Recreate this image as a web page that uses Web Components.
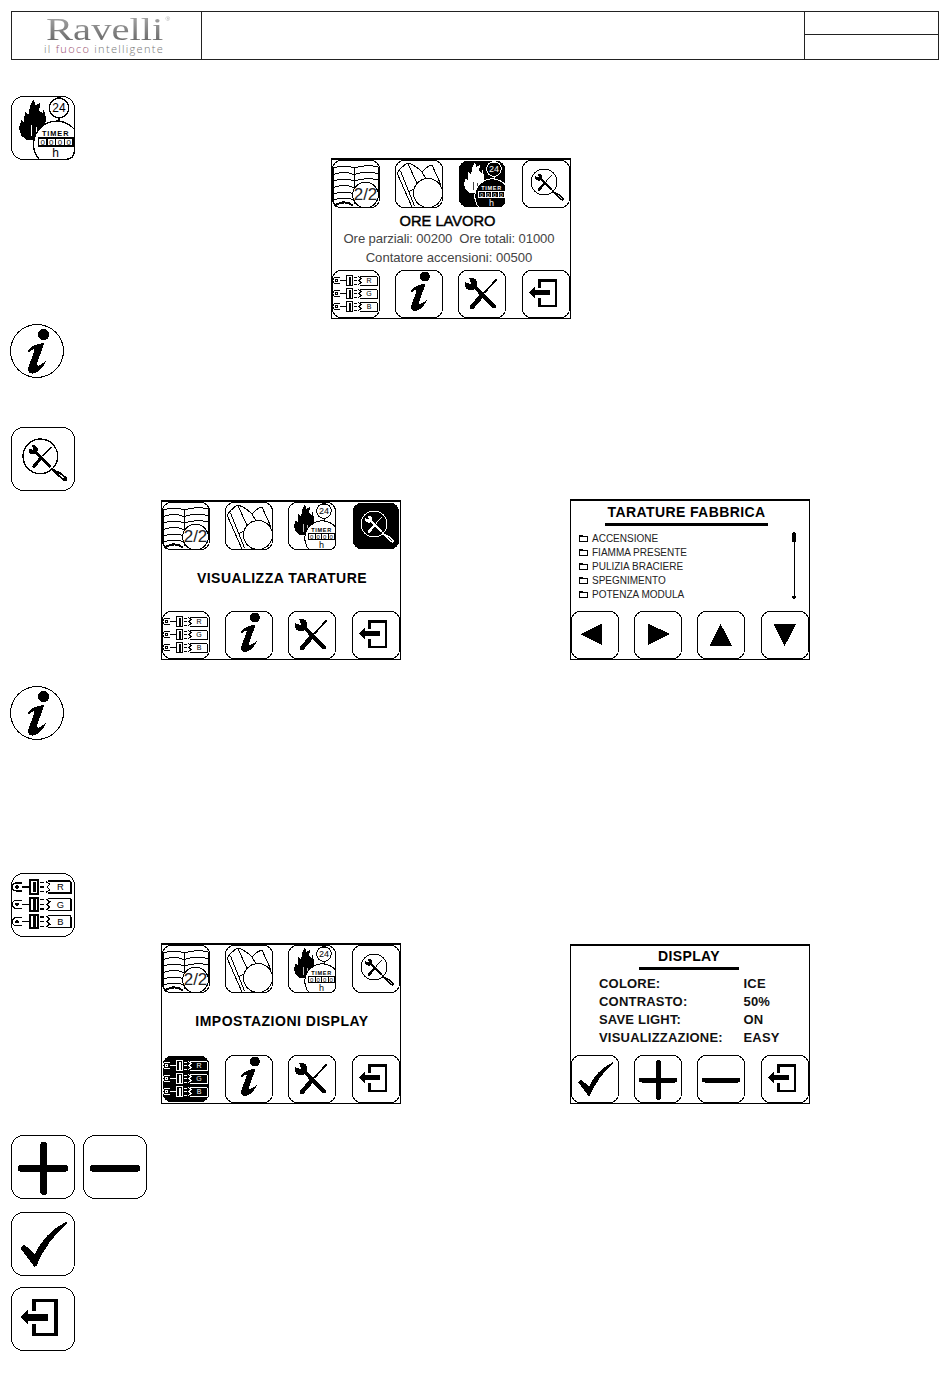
<!DOCTYPE html>
<html lang="it">
<head>
<meta charset="utf-8">
<title>Ravelli</title>
<style>
html,body{margin:0;padding:0;background:#fff;font-family:"Liberation Sans",Arial,sans-serif;color:#000}
</style>
</head>
<body>
<doc-page>
  <doc-header></doc-header>
  <doc-row style="margin:36px 0 0 11px"><lcd-icon name="timer" size="64"></lcd-icon></doc-row>
  <doc-row style="margin:-2px 0 0 331px">
    <lcd-screen style="height:161px">
      <lcd-icon slot="top" name="book"></lcd-icon><lcd-icon slot="top" name="flag"></lcd-icon><lcd-icon slot="top" name="timer" inv></lcd-icon><lcd-icon slot="top" name="loupe"></lcd-icon>
      <lcd-message>
        <b>ORE LAVORO</b>
        <span style="letter-spacing:-.1px">Ore parziali: 00200&nbsp; Ore totali: 01000</span>
        <span>Contatore accensioni: 00500</span>
      </lcd-message>
      <lcd-icon slot="bottom" name="rgb"></lcd-icon><lcd-icon slot="bottom" name="info"></lcd-icon><lcd-icon slot="bottom" name="tools"></lcd-icon><lcd-icon slot="bottom" name="exit"></lcd-icon>
    </lcd-screen>
  </doc-row>
  <doc-row style="margin:5px 0 0 10px"><lcd-icon name="info" size="54" round></lcd-icon></doc-row>
  <doc-row style="margin:49px 0 0 11px"><lcd-icon name="loupe" size="64"></lcd-icon></doc-row>
  <doc-row style="margin:8px 0 0 161px;gap:169px;align-items:flex-end">
    <lcd-screen style="height:160px">
      <lcd-icon slot="top" name="book"></lcd-icon><lcd-icon slot="top" name="flag"></lcd-icon><lcd-icon slot="top" name="timer"></lcd-icon><lcd-icon slot="top" name="loupe" inv></lcd-icon>
      <lcd-caption>VISUALIZZA TARATURE</lcd-caption>
      <lcd-icon slot="bottom" name="rgb"></lcd-icon><lcd-icon slot="bottom" name="info"></lcd-icon><lcd-icon slot="bottom" name="tools"></lcd-icon><lcd-icon slot="bottom" name="exit"></lcd-icon>
    </lcd-screen>
    <lcd-screen style="height:161px">
      <lcd-heading inset="34" rule="163">TARATURE FABBRICA</lcd-heading>
      <lcd-list>
        <lcd-folder>ACCENSIONE</lcd-folder>
        <lcd-folder>FIAMMA PRESENTE</lcd-folder>
        <lcd-folder>PULIZIA BRACIERE</lcd-folder>
        <lcd-folder>SPEGNIMENTO</lcd-folder>
        <lcd-folder>POTENZA MODULA</lcd-folder>
      </lcd-list>
      <lcd-icon slot="bottom" name="left"></lcd-icon><lcd-icon slot="bottom" name="right"></lcd-icon><lcd-icon slot="bottom" name="up"></lcd-icon><lcd-icon slot="bottom" name="down"></lcd-icon>
    </lcd-screen>
  </doc-row>
  <doc-row style="margin:26px 0 0 10px"><lcd-icon name="info" size="54" round></lcd-icon></doc-row>
  <doc-row style="margin:133px 0 0 11px"><lcd-icon name="rgb" size="64"></lcd-icon></doc-row>
  <doc-row style="margin:6px 0 0 161px;gap:169px;align-items:flex-end">
    <lcd-screen style="height:161px">
      <lcd-icon slot="top" name="book"></lcd-icon><lcd-icon slot="top" name="flag"></lcd-icon><lcd-icon slot="top" name="timer"></lcd-icon><lcd-icon slot="top" name="loupe"></lcd-icon>
      <lcd-caption>IMPOSTAZIONI DISPLAY</lcd-caption>
      <lcd-icon slot="bottom" name="rgb" inv></lcd-icon><lcd-icon slot="bottom" name="info"></lcd-icon><lcd-icon slot="bottom" name="tools"></lcd-icon><lcd-icon slot="bottom" name="exit"></lcd-icon>
    </lcd-screen>
    <lcd-screen style="height:160px">
      <lcd-heading inset="68" rule="100" style="margin-top:-1px">DISPLAY</lcd-heading>
      <lcd-settings>
        <span>COLORE:</span><span>ICE</span>
        <span>CONTRASTO:</span><span>50%</span>
        <span>SAVE LIGHT:</span><span>ON</span>
        <span>VISUALIZZAZIONE:</span><span>EASY</span>
      </lcd-settings>
      <lcd-icon slot="bottom" name="check"></lcd-icon><lcd-icon slot="bottom" name="plus"></lcd-icon><lcd-icon slot="bottom" name="minus"></lcd-icon><lcd-icon slot="bottom" name="exit"></lcd-icon>
    </lcd-screen>
  </doc-row>
  <doc-row style="margin:31px 0 0 11px;gap:8px"><lcd-icon name="plus" size="64"></lcd-icon><lcd-icon name="minus" size="64"></lcd-icon></doc-row>
  <doc-row style="margin:13px 0 0 11px"><lcd-icon name="check" size="64"></lcd-icon></doc-row>
  <doc-row style="margin:11px 0 0 11px"><lcd-icon name="exit" size="64"></lcd-icon></doc-row>
</doc-page>
<script>
const mk = (tag, css, html) => {
  customElements.define(tag, class extends HTMLElement {
    constructor(){ super(); this.attachShadow({mode:'open'}).innerHTML = `<style>${css}</style>${html}`; }
  });
};
mk('doc-page', ':host{display:block;width:950px;height:1387px;padding-top:11px;box-sizing:border-box;overflow:hidden}', '<slot></slot>');
mk('doc-row', ':host{display:flex}', '<slot></slot>');
mk('doc-header', `
  :host{display:grid;grid-template-columns:190px 603px 1fr;margin-left:11px;width:928px;height:49px;box-sizing:border-box;border:1px solid #222;font-family:"Liberation Sans",sans-serif}
  .logo{border-right:1px solid #222;display:flex;flex-direction:column;align-items:flex-start;padding:3px 0 0 32px}
  .name{font:32px/28px "Liberation Serif",serif;color:#7d7d7d;background:linear-gradient(#a8a8a8,#666);-webkit-background-clip:text;background-clip:text;-webkit-text-fill-color:transparent;position:relative;margin-left:2px;transform:scaleX(1.27);transform-origin:0 0}
  sup{position:absolute;left:94px;top:1px;font:5px/6px "Liberation Sans",sans-serif;color:#aaa;-webkit-text-fill-color:#aaa}
  .tag{font:300 11px/12px "Open Sans",sans-serif;letter-spacing:1.3px;color:#777;white-space:nowrap}
  .tag i{font-style:normal;color:#9a4f70}
  .mid{border-right:1px solid #222}
  .ref{display:grid;grid-template-rows:23px 1fr}
  .ref div:first-child{border-bottom:1px solid #222}
`, `<div class="logo"><div class="name">Ravelli<sup>®</sup></div><div class="tag">il <i>fuoco</i> intelligente</div></div><div class="mid"></div><div class="ref"><div></div><div></div></div>`);
mk('lcd-screen', `
  :host{display:flex;flex-direction:column;width:240px;box-sizing:border-box;border:1px solid #000;border-top-width:2px;background:#fff;font-family:"Liberation Sans",sans-serif}
  .row{display:grid;grid-template-columns:63px 63px 64px 48px}
  main{flex:1;display:flex;flex-direction:column;min-height:0}
`, `<div class="row"><slot name="top"></slot></div><main><slot></slot></main><div class="row"><slot name="bottom"></slot></div>`);
mk('lcd-message', `
  :host{display:flex;flex:1;flex-direction:column;align-items:center;padding-top:5px;font-size:13.1px;line-height:19px;color:#444;margin-left:-4px;white-space:nowrap}
  ::slotted(b){font-size:14.7px;font-weight:400;color:#000;-webkit-text-stroke:.45px #000;line-height:16px;margin-right:3px}
`, '<slot></slot>');
mk('lcd-caption', `
  :host{display:flex;flex:1;align-items:center;justify-content:center;font-weight:700;font-size:14px;letter-spacing:.5px;color:#000;white-space:nowrap;padding-bottom:6px;margin-left:2px}
`, '<slot></slot>');
customElements.define('lcd-heading', class extends HTMLElement {
  constructor(){ super(); this.attachShadow({mode:'open'}).innerHTML = `<style>
    :host{display:block;box-sizing:border-box;padding-top:2px;font:700 14px/18px "Liberation Sans",sans-serif;text-align:center;white-space:nowrap;letter-spacing:.4px}
    div{height:3px;background:#000;margin-top:2px}
  </style><slot></slot><div></div>`; }
  connectedCallback(){ this.style.marginLeft = this.getAttribute('inset')+'px'; this.style.width = this.getAttribute('rule')+'px'; }
});
mk('lcd-list', `
  :host{display:block;position:relative;padding:5px 0 0 8px;flex:1}
  svg{position:absolute;left:218px;top:5px}
`, `<slot></slot><svg width="10" height="70" viewBox="0 0 10 70" shape-rendering="crispEdges" aria-hidden="true"><path d="M5 0 L7 3 H3 Z"/><rect x="3" y="3" width="4" height="8"/><rect x="4.5" y="10" width="1" height="56"/><path d="M2.5 65 H7.5 L5 69 Z"/></svg>`);
mk('lcd-folder', `
  :host{display:flex;align-items:center;height:14px;font-size:10px;color:#222;white-space:nowrap;gap:4px}
  svg{flex:none}
`, `<svg width="9" height="7" viewBox="0 0 9 7" shape-rendering="crispEdges" aria-hidden="true"><path d="M.5 6.5 V.5 H3.5 L4.5 1.5 H8.500 V6.5 Z" fill="none" stroke="#000"/><path d="M0 1h9v1H0z"/></svg><slot></slot>`);
mk('lcd-settings', `
  :host{display:grid;grid-template-columns:144.5px 1fr;grid-auto-rows:18px;align-items:center;padding:5px 0 0 28px;font:700 13px/18px "Liberation Sans",sans-serif;letter-spacing:.2px;color:#111;white-space:nowrap;flex:1}
`, '<slot></slot>');

const tools = `<g>
  <path class="l" d="M15 15 L36 36.500" style="stroke-width:4;stroke-linecap:round"/>
  <circle class="f" cx="13" cy="14" r="6.500"/>
  <path class="b" d="M13.500 14.500 L5.500 11.500 L10.500 5.500 Z"/>
  <path class="l" d="M38.500 9.500 L26 23" style="stroke-width:1.800"/>
  <path class="l" d="M23 26.500 L14 37" style="stroke-width:4.500;stroke-linecap:round"/>
</g>`;
const rgbRow = (y, c) => `<g transform="translate(0 ${y})">
  <path class="l" d="M8 -3 H4 A3 3 0 0 0 4 3 H8"/><circle class="l" cx="4.500" cy="0" r=".9"/>
  <path class="l" d="M8 0 H14"/>
  <rect class="l" x="14.500" y="-5" width="6" height="10" style="stroke-width:1.300"/><rect class="f" x="16.500" y="-4" width="2" height="8"/>
  <path class="l" d="M22 -3.500 H25 M22 0 H25 M22 3.500 H25"/>
  <path class="l" d="M26.500 -4 L29 -2 L27 0 L29 2 L26.500 4 M28 -4.500 H44 Q45 -4.500 45 -3.500 V4.500 H28"/>
  <text x="37" y="2.500" text-anchor="middle" font-size="7" font-weight="400">${c}</text>
</g>`;
const digit = x => `<text x="${x}" y="36.600" text-anchor="middle" font-size="6">0</text>`;
const ICONS = {
  book:`<path class="l" d="M1.500 8 Q12 4 22 8 V44 M1.500 8 V42 M22 8 Q34 4 46 7 V32"/>
    <path class="l" d="M1.500 14.500 Q12 10.500 22 14.500 M1.500 21 Q12 17 22 21 M1.500 27.500 Q12 23.500 22 27.500 M1.500 34 Q12 30 22 34 M1.500 40 Q12 36 22 40 M22 14.500 Q34 10.500 46 13.500 M22 21 Q34 17 46 20"/>
    <path class="l" d="M2.500 46 Q12 39 21 45.500" style="stroke-width:2"/>
    <circle class="w" cx="33.500" cy="35" r="12.800"/>
    <text x="33.500" y="40" text-anchor="middle" font-size="17" style="fill:#222">2/2</text>`,
  flag:`<path class="l" d="M2 13 L17 47 M5.500 11 L19.500 46 M2 13 Q8 5 13 3 Q20 5 27 12 Q32 6 37 5 L46 25"/>
    <path class="l" d="M13 3.500 L24 28 M27 12 L31 19 M13 32 Q18 30 22 27"/>
    <circle class="w" cx="33" cy="33" r="14.500"/>`,
  timer:`<path class="f" d="M17 2.500 L18.500 7 L22 5 L21 11 L24 13 L24.500 10 L26.500 17 L25 23 L25.500 27 L22 32 L18 33.500 L12 33 L8 30 L6 24 L8 18 L9.500 20 L10.500 12 L13 14.500 L14.500 7 Z"/>
    <path class="l" style="stroke:var(--bg);stroke-width:.75" d="M15 30 L15.500 22 M19 31 L19.500 23"/>
    <circle class="l" cx="36" cy="9" r="7.300"/>
    <path class="f" d="M36 0 L38.500 2.500 H33.500 Z M36 22 L33.500 19 H38.500 Z"/><path class="l" d="M36 16 V20"/>
    <text x="36" y="12.300" text-anchor="middle" font-size="9">24</text>
    <path class="w" d="M47.500 25 A15.500 15.500 0 0 0 21 47.500 H41 Q47.500 47.500 47.500 41 Z"/>
    <text x="33.500" y="29.800" text-anchor="middle" font-size="5.500" font-weight="700" letter-spacing=".7">TIMER</text>
    <path class="l" d="M20.500 31.500 H46.500 V37.500 H20.500 Z M27 31.500 V37.500 M33.500 31.500 V37.500 M40 31.500 V37.500"/>
    ${digit(23.750)}${digit(30.250)}${digit(36.750)}${digit(43.250)}
    <text x="33.500" y="46" text-anchor="middle" font-size="9">h</text>`,
  loupe:`<circle class="l" cx="22" cy="22" r="13"/>
    <g transform="translate(22 22) scale(.54) translate(-23 -23)">${tools}</g>
    <path class="l" d="M30 31 L36 35.500" style="stroke-width:2"/>
    <path class="l" d="M35 34.500 L40.500 39" style="stroke-width:3.400;stroke-linecap:round"/>
    <path class="l" d="M36 35.500 L40 38.500" style="stroke:var(--bg);stroke-width:.9"/>`,
  info:`<circle class="f" cx="29.900" cy="9.500" r="5"/>
    <path class="f" d="M15.700 24 C18 20 24 17 30.500 17 L24 35 C23.500 37 25 37.500 26.500 36.500 L32 33 C30 38 25 44 20 44 C16 44 15.500 41 16.500 38 L21.500 24 C21.800 22 20 21.500 17 25.500 Z"/>`,
  tools,
  rgb: rgbRow(10.5,'R')+rgbRow(23.5,'G')+rgbRow(36.5,'B'),
  exit:`<path class="f" d="M16 9 H35 V37 H16 V28 H18.500 V34.500 H32.500 V11.500 H18.500 V18 H16 Z"/><path class="f" d="M7.300 22.700 L13 17 V20.200 H28 V25.200 H13 V28.400 Z"/>`,
  plus:`<rect class="f" x="5" y="22.500" width="38" height="5" rx="2.500"/><rect class="f" x="22" y="5" width="5" height="40" rx="2.500"/>`,
  minus:`<rect class="f" x="5" y="22.500" width="38" height="5" rx="2.500"/>`,
  check:`<path class="f" d="M7 27 L10 24.500 L18 31.500 C22 22 30 13 42 7 L42 9 C33 16 24 28 19 40.500 L17.500 41 Z"/>`,
  left:`<path class="f" d="M9.500 23 L31 12.500 V34 Z"/>`,
  right:`<path class="f" d="M36 23 L14 12.500 V34 Z"/>`,
  up:`<path class="f" d="M23.700 13 L35 35 H12.500 Z"/>`,
  down:`<path class="f" d="M23.700 35 L35 13 H12.500 Z"/>`
};
customElements.define('lcd-icon', class extends HTMLElement {
  constructor(){ super(); this.attachShadow({mode:'open'}); }
  connectedCallback(){
    const n = this.getAttribute('name'), s = +this.getAttribute('size') || 48, round = this.hasAttribute('round');
    const frame = round ? `<circle class="w" cx="24" cy="24" r="23.500" style="stroke-width:.9"/>`
      : `<rect class="w" x=".5" y=".5" width="47" height="47" rx="8.500" style="stroke-width:${48/s}"/>`;
    const thick = s === 64 ? `<path class="l" d="M9 .5 H38" style="stroke-width:1"/>` : '';
    const body = n === 'info' && !round ? `<g transform="translate(0 -3)">${ICONS[n]}</g>` : ICONS[n];
    this.shadowRoot.innerHTML = `<style>
      :host{display:block;flex:none;width:${s}px;height:${s}px;--fg:#000;--bg:#fff}
      :host([inv]){--fg:#fff;--bg:#000}
      svg{display:block;overflow:visible}
      .l{fill:none;stroke:var(--fg);stroke-width:1}
      .w{fill:var(--bg);stroke:var(--fg);stroke-width:1}
      .f{fill:var(--fg);stroke:none}
      .b{fill:var(--bg);stroke:none}
      text{fill:var(--fg);font-family:"Liberation Sans",sans-serif}
    </style><svg width="${s}" height="${s}" viewBox="0 0 48 48" shape-rendering="crispEdges" aria-hidden="true">${frame}${thick}${body}</svg>`;
  }
});
</script>
</body>
</html>
